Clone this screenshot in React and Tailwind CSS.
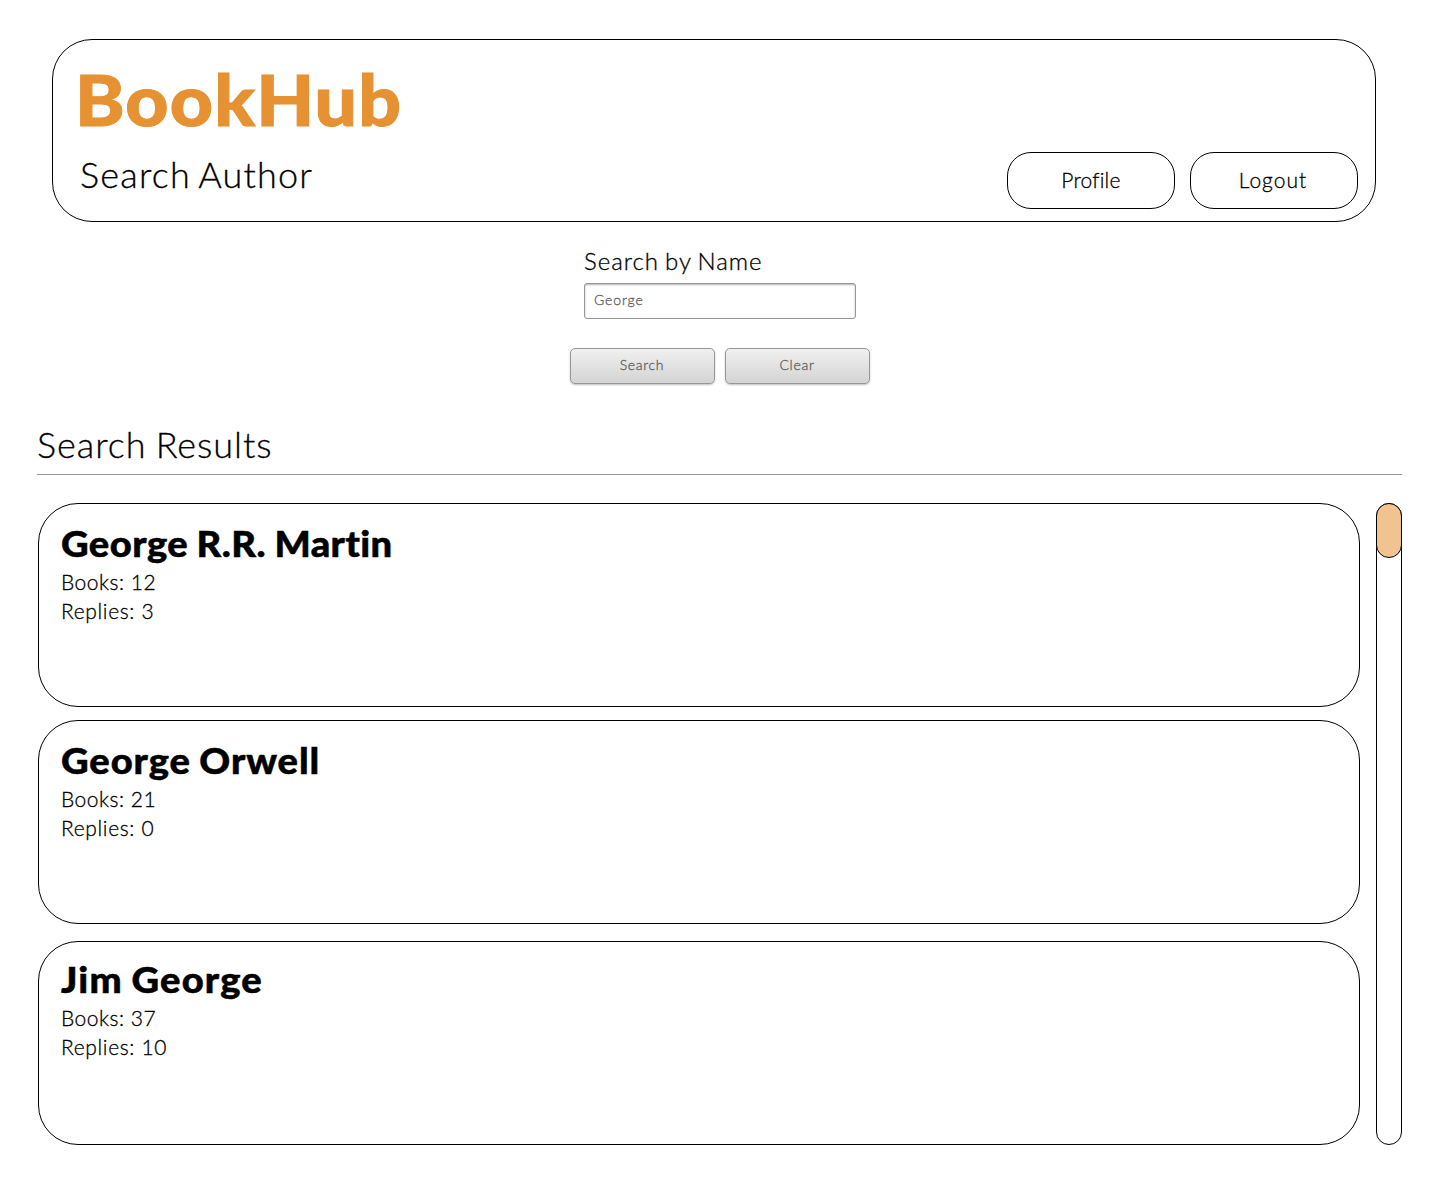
const authors = [
  { name: "George R.R. Martin", books: 12, replies: 3, box: "pt-[19px]", tracking: "tracking-[0.4px] [word-spacing:-1px]" },
  { name: "George Orwell", books: 21, replies: 0, box: "mt-[13px] pt-[19px]", tracking: "tracking-[0.85px] [word-spacing:-1.5px]" },
  { name: "Jim George", books: 37, replies: 10, box: "mt-[17px] pt-[17px]", tracking: "tracking-[1.1px] [word-spacing:-1.5px]" },
];

function Header() {
  return (
    <header className="ml-[52px] mt-[39px] flex h-[183px] w-[1324px] justify-between rounded-[40px] border border-black pl-[25px] pr-[17px]">
      <div className="pt-[23px]">
        <h1 className="-ml-[3px] origin-left scale-x-[1.07] text-[70px] leading-[72px] font-black tracking-[1.1px] text-[#e69132] [-webkit-text-stroke:1px_#e69132]">BookHub</h1>
        <p className="mt-[19px] pl-0.5 text-4xl leading-10 tracking-[1.2px] [word-spacing:-2.5px]">Search Author</p>
      </div>
      <nav className="mb-3 flex gap-[15px] self-end text-[21px]">
        <button className="h-[57px] w-[168px] rounded-3xl border border-black pb-px tracking-[0.25px]">Profile</button>
        <button className="h-[57px] w-[168px] rounded-3xl border border-black pr-0.5 pb-0.5 tracking-[1px]">Logout</button>
      </nav>
    </header>
  );
}

function FormButton({ children }) {
  return (
    <button className="h-9 w-[145px] rounded-[5px] border border-[#979797] bg-linear-to-b from-[#f0f0f0] to-[#d4d4d4] pr-px pb-0.5 text-sm tracking-[0.7px] text-[#5e5e5e] shadow-[0_1px_2px_rgba(0,0,0,0.25)]">
      {children}
    </button>
  );
}

function SearchForm() {
  return (
    <section className="mx-auto mt-[25px] w-[300px]">
      <div className="mx-auto w-[272px]">
        <label htmlFor="name" className="block text-2xl leading-7 tracking-[0.95px] whitespace-nowrap [word-spacing:-1.3px]">Search by Name</label>
        <input
          id="name"
          defaultValue="George"
          className="mt-2 block h-9 w-full rounded-[3px] border border-[#979797] pb-[3px] pl-[9px] text-sm tracking-[0.9px] text-[#5e5e5e] shadow-[inset_0_1px_2px_rgba(0,0,0,0.3)] outline-none"
        />
      </div>
      <div className="mt-[29px] flex gap-2.5">
        <FormButton>Search</FormButton>
        <FormButton>Clear</FormButton>
      </div>
    </section>
  );
}

function AuthorCard({ author }) {
  return (
    <article className={`h-[204px] rounded-[40px] border border-black pl-[22px] ${author.box}`}>
      <h3 className={`origin-left scale-x-[1.06] text-4xl leading-10 font-black [-webkit-text-stroke:0.5px_black] ${author.tracking}`}>{author.name}</h3>
      <div className="mt-1 text-[21px] leading-[29px]">
        <p className="tracking-[0.5px]">Books: {author.books}</p>
        <p className="tracking-[0.65px]">Replies: {author.replies}</p>
      </div>
    </article>
  );
}

export default function App() {
  return (
    <div className="flow-root h-[1200px] w-[1440px] bg-white font-['Lato',sans-serif] font-light text-black [-webkit-text-stroke:0.3px_currentColor]">
      <Header />
      <SearchForm />
      <main className="ml-[37px] mt-10 w-[1365px]">
        <h2 className="border-b border-[#979797] pb-2.5 text-4xl leading-10 tracking-[0.95px] [word-spacing:-1.5px]">Search Results</h2>
        <div className="mt-7 flex justify-between pl-px">
          <div className="w-[1322px]">
            {authors.map((author) => (
              <AuthorCard key={author.name} author={author} />
            ))}
          </div>
          <div className="h-[642px] w-[26px] rounded-full border border-black">
            <div className="-mx-px -mt-px h-[55px] rounded-full border border-black bg-[#f1c391]" />
          </div>
        </div>
      </main>
    </div>
  );
}
